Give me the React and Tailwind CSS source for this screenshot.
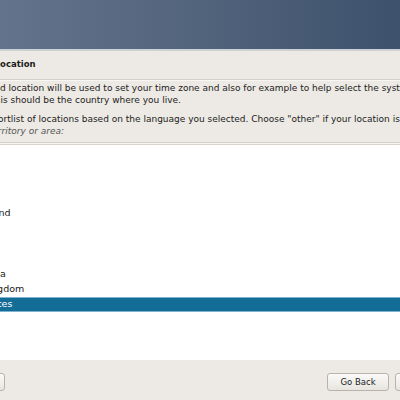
import React from "react";

const rows = [
  "Canada",
  "Hong Kong",
  "India",
  "Ireland",
  "New Zealand",
  "Nigeria",
  "Philippines",
  "Singapore",
  "South Africa",
  "United Kingdom",
  "United States",
  "Zambia",
  "Zimbabwe",
  "other",
];

export default function App() {
  return (
    <div className="w-[400px] h-[400px] overflow-hidden bg-[#edeae5] flex flex-col font-['DejaVu_Sans',sans-serif] text-[#2e3436]">
      <div className="h-[49px] shrink-0 bg-gradient-to-r from-[#62738b] via-[#52647c] to-[#3e516c]" />
      <div className="h-[2px] shrink-0 bg-[#cdd1d5]" />
      <div className="flex flex-col -ml-[52px] w-[470px]">
        <div className="h-[28px] flex items-center pb-[2px] -ml-[8px] text-[8.5px] font-bold text-[#1a1a1a]">
          Select your location
        </div>
        <div className="h-[2px] border-t border-[#d6d1c8] bg-[#f7f6f3] -ml-[10px]" />
        <div className="flex flex-col pt-[1px] text-[9px] leading-[12px] text-[#222]">
          <div className="whitespace-nowrap">
            The selected location will be used to set your time zone and also for example to help select the system locale.
          </div>
          <div className="whitespace-nowrap">Normally this should be the country where you live.</div>
          <div className="h-[7px]" />
          <div className="whitespace-nowrap">
            This is a shortlist of locations based on the language you selected. Choose "other" if your location is not listed.
          </div>
          <div className="whitespace-nowrap italic text-[#555]">Country, territory or area:</div>
        </div>
        <div className="h-[5px]" />
        <div className="h-[2px] border-t border-[#d6d1c8] bg-[#f7f6f3] -ml-[10px]" />
      </div>
      <div className="h-[216px] shrink-0 bg-white border-t border-[#d8d4cd] flex flex-col overflow-hidden">
        <div className="flex flex-col -ml-[52px] w-[452px] text-[9.5px] text-[#1a1a1a]">
          {rows.map((r) =>
            r === "United States" ? (
              <div
                key={r}
                className="h-[15.2px] flex items-center bg-[#146d96] text-white border-y border-[#7fb2cc]"
              >
                {r}
              </div>
            ) : (
              <div key={r} className="h-[15.2px] flex items-center">
                {r}
              </div>
            )
          )}
        </div>
      </div>
      <div className="flex items-center pt-[13px] text-[8.5px] text-[#222]">
        <div className="h-[18px] w-[60px] -ml-[55px] rounded-[3px] border border-[#b8b3ab] bg-gradient-to-b from-[#fbfaf9] to-[#e8e5e0] flex items-center justify-center">
          Screenshot
        </div>
        <div className="flex-1" />
        <div className="h-[18px] w-[62px] rounded-[3px] border border-[#b8b3ab] bg-gradient-to-b from-[#fbfaf9] to-[#e8e5e0] flex items-center justify-center">
          Go Back
        </div>
        <div className="h-[18px] w-[62px] ml-[6px] -mr-[57px] rounded-[3px] border border-[#b8b3ab] bg-gradient-to-b from-[#fbfaf9] to-[#e8e5e0] flex items-center justify-center">
          Continue
        </div>
      </div>
    </div>
  );
}
